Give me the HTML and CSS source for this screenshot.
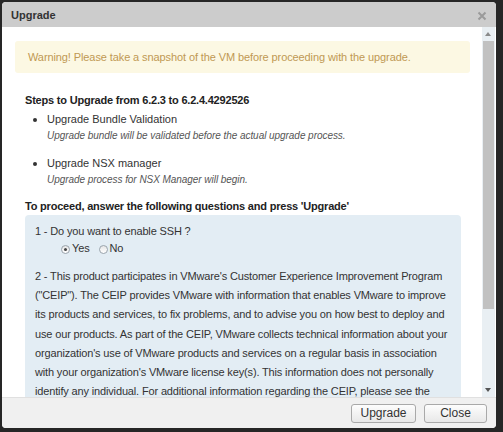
FILE: index.html
```html
<!DOCTYPE html>
<html>
<head>
<meta charset="utf-8">
<link rel="stylesheet" href="styles.css">
</head>
<body>
<div class="dialog">
  <div class="titlebar">
    <span class="title">Upgrade</span>
    <svg class="close" width="10" height="10" viewBox="0 0 10 10"><path d="M1.5 1.5 L8.5 8.5 M8.5 1.5 L1.5 8.5" stroke="#9a9a9a" stroke-width="2"/></svg>
  </div>
  <div class="main">
    <div class="content">
      <div class="warning">Warning! Please take a snapshot of the VM before proceeding with the upgrade.</div>
      <div class="steps">
        <div class="heading">Steps to Upgrade from 6.2.3 to 6.2.4.4292526</div>
        <ul class="list">
          <li>
            <div class="item-title">Upgrade Bundle Validation</div>
            <div class="item-desc">Upgrade bundle will be validated before the actual upgrade process.</div>
          </li>
          <li>
            <div class="item-title">Upgrade NSX manager</div>
            <div class="item-desc">Upgrade process for NSX Manager will begin.</div>
          </li>
        </ul>
        <div class="heading">To proceed, answer the following questions and press 'Upgrade'</div>
        <div class="questions">
          <div class="q">1 - Do you want to enable SSH ?</div>
          <div class="radios">
            <span class="radio checked"></span><span class="rlabel">Yes</span>
            <span class="radio"></span><span class="rlabel">No</span>
          </div>
          <p class="para">2 - This product participates in VMware's Customer Experience Improvement Program ("CEIP"). The CEIP provides VMware with information that enables VMware to improve its products and services, to fix problems, and to advise you on how best to deploy and use our products. As part of the CEIP, VMware collects technical information about your organization's use of VMware products and services on a regular basis in association with your organization's VMware license key(s). This information does not personally identify any individual. For additional information regarding the CEIP, please see the</p>
        </div>
      </div>
    </div>
    <div class="scrollbar">
      <div class="arrow up"></div>
      <div class="track"><div class="thumb"></div></div>
      <div class="arrow down"></div>
    </div>
  </div>
  <div class="footer">
    <button class="btn">Upgrade</button>
    <button class="btn">Close</button>
  </div>
</div>
</body>
</html>
```
FILE: styles.css
```css
html, body {
  margin: 0;
  padding: 0;
  background: #262626;
  font-family: "Liberation Sans", Arial, sans-serif;
  color: #333;
}
.dialog {
  margin: 2px 0 0 2px;
  width: 494px;
  height: 426px;
  background: #fff;
  border-radius: 4px;
  display: flex;
  flex-direction: column;
  overflow: hidden;
}
.titlebar {
  height: 25px;
  flex: none;
  background: #cccccc;
  display: flex;
  align-items: center;
  justify-content: space-between;
  padding: 0 9px 0 9px;
}
.title {
  font-size: 11px;
  font-weight: bold;
  color: #333;
}
.close {
  margin-top: 3px;
}
.main {
  flex: 1;
  display: flex;
  min-height: 0;
}
.content {
  flex: 1;
  overflow: hidden;
  padding: 14px 12px 0 13px;
}
.warning {
  background: #fcf8e3;
  color: #c09853;
  font-size: 11px;
  letter-spacing: -0.1px;
  height: 32px;
  line-height: 32px;
  padding: 0 13px;
  border-radius: 3px;
}
.steps {
  margin: 19px 0 0 10px;
}
.heading {
  font-size: 11px;
  font-weight: bold;
  line-height: 16px;
  color: #222;
  letter-spacing: -0.2px;
}
.list {
  margin: 3px 0 11px 0;
  padding: 0 0 0 22px;
  list-style: disc;
  font-size: 12px;
}
.list li {
  margin-bottom: 12px;
}
.list li:last-child {
  margin-bottom: 0;
}
.item-title {
  font-size: 11px;
  line-height: 16px;
}
.item-desc {
  font-size: 10px;
  font-style: italic;
  color: #555;
  line-height: 15px;
  margin-top: 1px;
  letter-spacing: -0.05px;
}
.questions {
  margin-top: 1px;
  width: 436px;
  box-sizing: border-box;
  background: #e3edf4;
  border-radius: 4px;
  padding: 8px 10px 10px 10px;
  font-size: 11px;
  letter-spacing: -0.15px;
}
.q {
  line-height: 16px;
}
.radios {
  display: flex;
  align-items: center;
  margin: 1px 0 0 26px;
  height: 16px;
}
.radio {
  width: 9px;
  height: 9px;
  border: 1px solid #9aa4ac;
  border-radius: 50%;
  background: linear-gradient(#e6e6e6, #fff);
  box-sizing: border-box;
  margin-top: 2px;
  margin-right: 2px;
  position: relative;
}
.radio.checked::after {
  content: "";
  position: absolute;
  left: 2px;
  top: 2px;
  width: 3px;
  height: 3px;
  border-radius: 50%;
  background: #444;
}
.rlabel {
  margin-right: 9px;
}
.para {
  margin: 11px 0 0 0;
  line-height: 19.2px;
}
.scrollbar {
  width: 13px;
  flex: none;
  background: #e9eff3;
  display: flex;
  flex-direction: column;
  margin-right: 1px;
}
.arrow {
  height: 14px;
  flex: none;
  position: relative;
}
.arrow::after {
  content: "";
  position: absolute;
  left: 3px;
  width: 0;
  height: 0;
  border-left: 3.5px solid transparent;
  border-right: 3.5px solid transparent;
}
.arrow.up::after {
  top: 5px;
  border-bottom: 4px solid #8a8a8a;
}
.arrow.down::after {
  top: 5px;
  border-top: 4px solid #555;
}
.track {
  flex: 1;
  padding: 0 1px;
}
.thumb {
  height: 268px;
  background: #c1c1c1;
}
.footer {
  height: 30px;
  flex: none;
  background: #f0f0f0;
  border-top: 1px solid #e0e0e0;
  display: flex;
  justify-content: flex-end;
  align-items: center;
  gap: 8px;
  padding-right: 9px;
}
.btn {
  font-family: "Liberation Sans", Arial, sans-serif;
  font-size: 12px;
  color: #333;
  height: 19px;
  padding: 0;
  border: 1px solid #a9a9a9;
  border-radius: 3px;
  background: linear-gradient(#fdfdfd, #e8e8e8);
  width: 65px;
}
.btn + .btn {
  width: 63px;
}
```
